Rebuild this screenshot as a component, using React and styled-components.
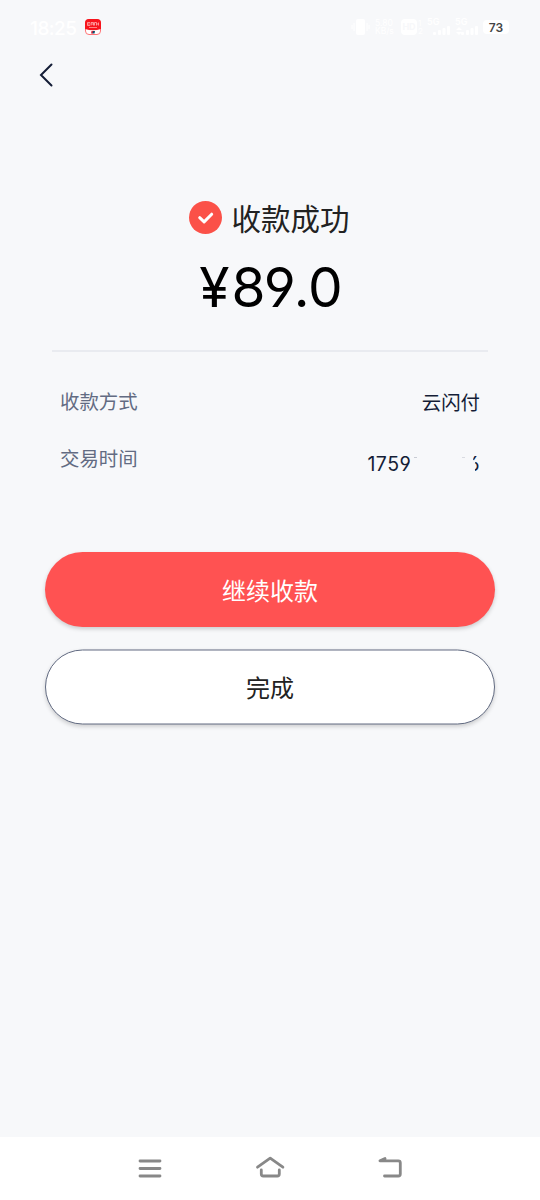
import React from 'react';
import styled, { createGlobalStyle } from 'styled-components';

const PAGE = '#f7f8fa';
const INK = '#141d36';
const HAN = '"Noto Sans CJK SC", sans-serif';

const GlobalStyle = createGlobalStyle`
  body {
    margin: 0;
    background: ${PAGE};
    font-family: ${HAN};
  }
  * {
    box-sizing: border-box;
  }
`;

const Key = ({ children, width, height }) => (
  <svg
    width={width}
    height={height}
    viewBox={`0 0 ${width} ${height}`}
    fill="none"
    stroke="#888"
    strokeWidth="2.800"
    strokeLinecap="round"
    strokeLinejoin="round"
  >
    {children}
  </svg>
);

const Signal = ({ second }) => (
  <SignalBox>
    <Tiny>5G</Tiny>
    <svg width="24" height="10" fill="#fff">
      {second && <path d="M1 4l3-3 3 3zM1 6l3 3 3-3z" />}
      <rect x="6" y="6" width="3" height="3" rx="1" />
      <rect x="11" y="4" width="3" height="5" rx="1" />
      <rect x="15.500" y="2" width="3" height="7" rx="1" />
      <rect x="20" y="0" width="3" height="9" rx="1" />
    </svg>
  </SignalBox>
);

const StatusBar = () => (
  <Status>
    <Clock>18:25</Clock>
    <svg width="16" height="16" viewBox="0 0 16 16">
      <rect x=".5" y=".5" width="15" height="15" rx="3.500" fill="#fff" stroke="#ff7476" />
      <path d="M0 10V4a4 4 0 0 1 4-4h8a4 4 0 0 1 4 4v6q-8 2.500-16 0z" fill="#f7141c" />
      <path
        d="M5 3.500H2.500v3H5M2.500 5H5M6 6.500v-3h2.500v3M6 5h2.500M9.500 6.500v-3h2v3M11.500 5h2M13.500 3.500v3"
        fill="none"
        stroke="#ffb0b0"
        strokeWidth=".8"
      />
      <path d="M4 8.500h8" stroke="#ff9c9c" strokeWidth=".8" />
      <path d="M6.500 12h2l-.5 2.500H6z" fill="#d3243c" />
      <path d="M8 12h2l-.5 2.500h-2z" fill="#0b4f6c" />
    </svg>
    <StatusRight>
      <svg width="19" height="16" fill="#fff">
        <rect x="5" y="0" width="9" height="16" rx="2" />
        <path d="M3 4v8M1 6v4M16 4v8M18 6v4" stroke="#fff" />
      </svg>
      <Speed>
        <span>5.80</span>
        <span>KB/s</span>
      </Speed>
      <Hd>HD</Hd>
      <Sims>
        <span>1</span>
        <span>2</span>
      </Sims>
      <Signal />
      <Signal second />
      <Battery>73</Battery>
    </StatusRight>
  </Status>
);

const App = () => (
  <>
    <GlobalStyle />
    <Screen>
      <StatusBar />
      <TopBar>
        <svg width="16" height="24" viewBox="0 0 16 24" fill="none" stroke={INK} strokeWidth="2">
          <path d="M12.500 1.500L2 12l10.500 10.500" strokeLinecap="round" />
        </svg>
      </TopBar>
      <Result>
        <svg width="33" height="33" viewBox="0 0 33 33">
          <circle cx="16.500" cy="16.500" r="16.500" fill="#fb5148" />
          <path
            d="M10.700 16.700l4.400 4.200 7.600-7.700"
            fill="none"
            stroke="#fff"
            strokeWidth="3"
            strokeLinecap="round"
            strokeLinejoin="round"
          />
        </svg>
        <Title>收款成功</Title>
      </Result>
      <Amount>
        <Yen>¥</Yen>89.0
      </Amount>
      <Details>
        <Row>
          <Label>收款方式</Label>
          <Value>云闪付</Value>
        </Row>
        <Row>
          <Label>交易时间</Label>
          <Stamp>
            1759<Hidden />6
          </Stamp>
        </Row>
      </Details>
      <Actions>
        <Button $primary>继续收款</Button>
        <Button>完成</Button>
      </Actions>
      <NavBar>
        <Key width={24} height={20}>
          <path d="M2 3h20M2 10.500h20M2 18h20" />
        </Key>
        <Key width={30} height={24}>
          <path d="M2.500 11.200L15.200 2.200l12.700 9M6.300 14v4q0 2 2 2h14q2 0 2-2v-4" />
        </Key>
        <Key width={26} height={22}>
          <path d="M8 1.500L3 3.800h18.300q2 0 2 2V17q0 2-2 2H7.500" />
        </Key>
      </NavBar>
    </Screen>
  </>
);

const Screen = styled.div`
  display: flex;
  flex-direction: column;
  width: 540px;
  height: 1200px;
  background: ${PAGE};
  overflow: hidden;
`;

const Status = styled.div`
  display: flex;
  align-items: center;
  height: 54px;
  padding: 0 31px 0 30px;
  color: #fff;
  font-family: Inter, sans-serif;
`;

const Clock = styled.div`
  width: 55px;
  padding-top: 2px;
  font-size: 19px;
  font-weight: 500;
  letter-spacing: -0.5px;
`;

const StatusRight = styled.div`
  display: flex;
  align-items: center;
  margin-left: auto;
`;

const Speed = styled.div`
  display: flex;
  flex-direction: column;
  width: 20px;
  margin: 0 6px 0 5px;
  font-size: 8.5px;
  line-height: 8px;
`;

const Hd = styled.div`
  width: 16px;
  height: 16px;
  border-radius: 4px;
  background: #fff;
  color: ${PAGE};
  font-size: 9px;
  font-weight: 700;
  line-height: 16px;
  text-align: center;
`;

const Sims = styled.div`
  display: flex;
  flex-direction: column;
  width: 10px;
  padding-left: 1px;
  font-size: 8px;
  line-height: 8px;
`;

const SignalBox = styled.div`
  display: flex;
  flex-direction: column;
  width: 28px;
`;

const Tiny = styled.span`
  font-size: 9px;
  font-weight: 600;
  line-height: 8px;
`;

const Battery = styled.div`
  width: 26px;
  height: 14px;
  border-radius: 4px;
  background: #fff;
  color: #444;
  font-size: 12px;
  font-weight: 600;
  line-height: 16px;
  text-align: center;
`;

const TopBar = styled.div`
  display: flex;
  height: 147px;
  padding: 9px 0 0 39px;
`;

const Result = styled.div`
  display: flex;
  justify-content: center;
  align-items: center;
  gap: 9px;
  height: 33px;
  padding-right: 1px;
`;

const Title = styled.div`
  padding-bottom: 2px;
  color: #222;
  font-size: 29.5px;
  line-height: 36px;
`;

const Amount = styled.div`
  height: 118px;
  margin: 0 52px;
  padding-top: 20px;
  border-bottom: 2px solid #e9ebf0;
  color: #000;
  font-family: Inter, sans-serif;
  font-size: 55px;
  font-feature-settings: 'ss01' 1;
  font-kerning: none;
  letter-spacing: -1.8px;
  line-height: 66px;
  text-align: center;
`;

const Yen = styled.span`
  letter-spacing: 2px;
`;

const Details = styled.div`
  display: flex;
  flex-direction: column;
  height: 200px;
  padding: 20px 60px 0;
`;

const Row = styled.div`
  display: flex;
  justify-content: space-between;
  height: 57px;
  font-size: 19.4px;
  line-height: 58px;
`;

const Label = styled.div`
  color: #626b82;
`;

const Value = styled.div`
  padding-top: 1px;
  color: ${INK};
`;

const Stamp = styled.div`
  display: flex;
  padding-top: 6px;
  color: ${INK};
  font-family: Inter, sans-serif;
  font-size: 19.5px;
  font-feature-settings: 'ss01' 1;
  font-kerning: none;
  letter-spacing: 0.4px;
`;

/* masked digits, the patch also bites into both neighbours */
const Hidden = styled.span`
  position: relative;
  width: 57px;

  &::after {
    content: '';
    position: absolute;
    top: 18px;
    left: -2px;
    width: 67px;
    height: 26px;
    background:
      linear-gradient(#c9ccd4, #c9ccd4) 5px 4px / 3px 1px no-repeat,
      linear-gradient(#d9dbe1, #d9dbe1) 53px 4px / 3px 1px no-repeat,
      ${PAGE};
    clip-path: polygon(3px 0, 64px 0, 64px 7px, 100% 8px, 65px 11px, 66px 19px, 65px 26px, 0 26px, 0 14px);
  }
`;

const Actions = styled.div`
  display: flex;
  flex-direction: column;
  gap: 22px;
  flex: 1;
  padding: 0 45px;
`;

const Button = styled.button`
  position: relative;
  isolation: isolate;
  height: 75px;
  padding: 0;
  border: 0;
  background: none;
  color: ${(props) => (props.$primary ? '#fff' : '#222')};
  font-family: ${HAN};
  font-size: 24px;
  font-weight: 400;

  &::before {
    content: '';
    position: absolute;
    inset: 0;
    z-index: -1;
    border: ${(props) => (props.$primary ? 'none' : '1px solid #626b82')};
    border-radius: 38px;
    background: ${(props) => (props.$primary ? '#ff5252' : '#fff')};
    box-shadow: 0 2px 4px rgba(0, 0, 0, 0.18);
    transform: ${(props) => (props.$primary ? 'none' : 'translateY(0.5px)')};
  }
`;

const NavBar = styled.div`
  display: flex;
  justify-content: space-between;
  align-items: center;
  height: 63px;
  padding: 0 137px 1px 138px;
  background: #fff;
`;

export default App;
